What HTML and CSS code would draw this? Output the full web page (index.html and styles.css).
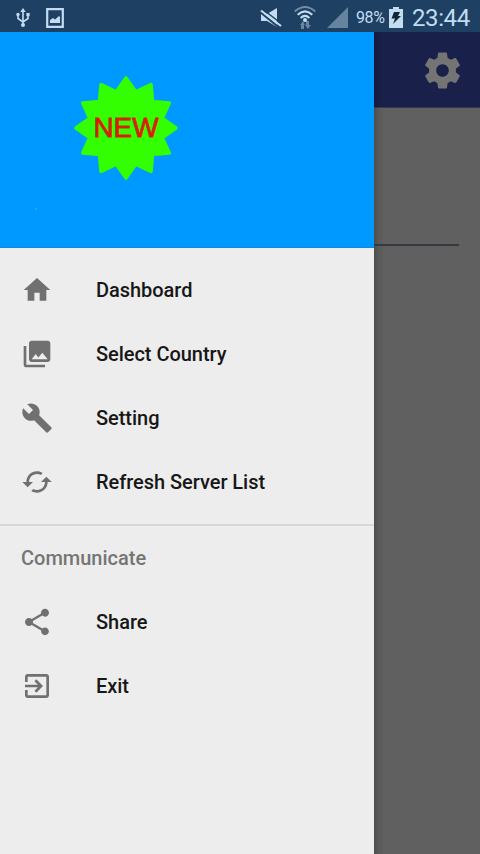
FILE: index.html
```html
<!DOCTYPE html>
<html lang="en">
<head>
<meta charset="utf-8">
<title>Navigation</title>
<link rel="stylesheet" href="styles.css">
</head>
<body>
<div class="screen">
  <header class="status">
    <svg class="usb" width="14" height="20" viewBox="0 0 14 20"><g fill="none" stroke="currentColor" stroke-width="1.6"><path d="M7 17V3M2 7v3.500l5 3.500 5-3.500V7"/></g><path d="M7 0l2.700 4H4.300z" fill="currentColor"/><circle cx="7" cy="17" r="2" fill="currentColor"/><circle cx="2" cy="6.500" r="1.700" fill="currentColor"/><path d="M10.400 5h3.200v3.200h-3.200z" fill="currentColor"/></svg>
    <svg class="photo" width="18" height="20" viewBox="0 0 18 20"><path d="M1.200 1.200h15.600v17.600H1.200z" fill="none" stroke="currentColor" stroke-width="2.200"/><path d="M4 15v-3l3-2 2 1.500L13 8l1 1v6z" fill="currentColor"/></svg>
    <span class="space"></span>
    <svg class="mute" width="22" height="20" viewBox="0 0 22 20"><path d="M1 6h6l10-6v19L7 13H1z" fill="currentColor"/><path d="M0 4l19 15.500" stroke="#1d4063" stroke-width="2"/><path d="M1 2.500l20 15.500" stroke="currentColor" stroke-width="2.200"/><path d="M2.500 1l19 14.800" stroke="#1d4063" stroke-width="1.400"/></svg>
    <svg class="wifi" width="22" height="24" viewBox="0 0 22 24"><g fill="none" stroke="currentColor" stroke-width="2"><path d="M.800 5.500Q11-3.500 21.200 5.500" opacity=".5"/><path d="M3.700 8.800Q11 2 18.300 8.800M6.600 12Q11 7.800 15.400 12"/></g><circle cx="11" cy="14" r="2" fill="currentColor"/><g fill="currentColor" opacity=".45"><path d="M6 19l3-4 2 4h-1v4H7v-4zM11 19h1v-4h3v4h2l-3 4z"/></g></svg>
    <svg class="signal" width="21" height="21" viewBox="0 0 21 21"><path d="M21 0v21H0z" fill="#6683a0"/></svg>
    <span class="percent">98%</span>
    <svg class="battery" width="14" height="21" viewBox="0 0 14 21"><path d="M4 0h6v2h4v19H0V2h4z" fill="currentColor"/><path d="M5 5h6l-2 4h3l-8 8 2-5.500H2.500z" fill="#142438"/></svg>
    <span class="clock">23:44</span>
  </header>
  <div class="body">
    <nav class="drawer">
      <div class="banner">
        <svg class="badge" width="108" height="108" viewBox="-54 -54 108 108">
          <path d="M0-50L9.700-36.200 25-43.300 26.500-26.500 43.300-25 36.200-9.700 50 0 36.200 9.700 43.300 25 26.500 26.500 25 43.300 9.700 36.200 0 50-9.700 36.200-25 43.300-26.500 26.500-43.300 25-36.200 9.700-50 0-36.200-9.700-43.300-25-26.500-26.500-25-43.300-9.700-36.200Z" fill="#3f0" stroke="#3f0" stroke-width="3.600" stroke-linejoin="round"/>
          <text class="new" x="-32.500" y="8.500" textLength="65" lengthAdjust="spacingAndGlyphs">NEW</text>
        </svg>
        <span class="dot"></span>
      </div>
      <ul class="menu">
        <li><svg viewBox="0 0 24 24"><path d="M10 20v-6h4v6h5v-8h3L12 3 2 12h3v8z"/></svg>Dashboard</li>
        <li><svg viewBox="0 0 24 24"><path d="M22 16V4c0-1.100-.9-2-2-2H8c-1.100 0-2 .9-2 2v12c0 1.100.9 2 2 2h12c1.100 0 2-.9 2-2zm-11-4l2.030 2.710L16 11l4 5H8l3-4zM2 6v14c0 1.100.9 2 2 2h14v-2H4V6H2z"/></svg>Select Country</li>
        <li><svg viewBox="0 0 24 24"><path d="M22.700 19l-9.100-9.100c.9-2.300.4-5-1.500-6.900-2-2-5-2.400-7.400-1.300L9 6 6 9 1.600 4.700C.4 7.100.9 10.100 2.900 12.100c1.900 1.900 4.600 2.400 6.900 1.500l9.100 9.100c.4.4 1 .4 1.400 0l2.300-2.300c.5-.4.500-1.100.1-1.400z"/></svg>Setting</li>
        <li><svg viewBox="0 0 24 24"><path d="M19 8l-4 4h3c0 3.310-2.690 6-6 6-1.010 0-1.970-.25-2.800-.7l-1.460 1.460C8.970 19.540 10.430 20 12 20c4.420 0 8-3.580 8-8h3l-4-4zM6 12c0-3.310 2.690-6 6-6 1.010 0 1.970.25 2.800.7l1.460-1.460C15.030 4.460 13.570 4 12 4c-4.420 0-8 3.580-8 8H1l4 4 4-4H6z"/></svg>Refresh Server List</li>
      </ul>
      <h2 class="group">Communicate</h2>
      <ul class="menu">
        <li><svg viewBox="0 0 24 24"><path d="M18 16.080c-.76 0-1.440.3-1.960.77L8.910 12.700c.05-.23.090-.46.090-.7s-.040-.47-.090-.7l7.050-4.110c.54.500 1.250.81 2.040.81 1.660 0 3-1.340 3-3s-1.340-3-3-3-3 1.340-3 3c0 .24.040.47.090.7L8.040 9.810C7.500 9.310 6.790 9 6 9c-1.660 0-3 1.340-3 3s1.340 3 3 3c.79 0 1.500-.31 2.040-.81l7.120 4.160c-.050.21-.080.43-.080.65 0 1.610 1.310 2.920 2.920 2.920s2.920-1.310 2.920-2.920-1.310-2.920-2.920-2.920z"/></svg>Share</li>
        <li><svg viewBox="0 0 24 24"><path d="M10.090 15.590L11.500 17l5-5-5-5-1.410 1.410L12.670 11H3v2h9.670l-2.580 2.590zM19 3H5c-1.110 0-2 .9-2 2v4h2V5h14v14H5v-4H3v4c0 1.100.89 2 2 2h14c1.100 0 2-.9 2-2V5c0-1.100-.9-2-2-2z"/></svg>Exit</li>
      </ul>
    </nav>
    <main class="page">
      <div class="toolbar"><svg class="gear" viewBox="0 0 24 24"><path d="M19.430 12.980c.040-.32.070-.64.070-.98s-.030-.66-.070-.98l2.110-1.650c.19-.15.240-.42.120-.64l-2-3.460c-.12-.22-.39-.3-.61-.22l-2.490 1c-.52-.4-1.080-.73-1.690-.98l-.38-2.650C14.460 2.180 14.250 2 14 2h-4c-.25 0-.46.180-.49.420l-.38 2.650c-.61.250-1.170.59-1.690.98l-2.490-1c-.23-.090-.49 0-.61.220l-2 3.460c-.13.220-.070.490.120.640l2.110 1.650c-.040.320-.070.650-.070.980s.030.660.070.980l-2.110 1.650c-.19.150-.24.420-.12.640l2 3.460c.12.220.39.300.61.220l2.490-1c.52.400 1.080.730 1.690.980l.38 2.650c.030.240.240.420.490.420h4c.25 0 .46-.18.490-.42l.38-2.650c.61-.25 1.170-.59 1.690-.98l2.490 1c.23.090.49 0 .61-.22l2-3.460c.12-.22.070-.49-.12-.64l-2.110-1.650zM12 15.500c-1.930 0-3.500-1.570-3.500-3.500s1.570-3.500 3.500-3.500 3.500 1.570 3.500 3.500-1.570 3.500-3.500 3.500z"/></svg></div>
      <div class="field"></div>
    </main>
  </div>
</div>
</body>
</html>
```
FILE: styles.css
```css
* { box-sizing: border-box; }
body { margin: 0; font-family: Roboto, "Liberation Sans", sans-serif; }
svg { display: block; flex: none; }
.screen { width: 480px; height: 854px; display: flex; flex-direction: column; overflow: hidden; }
.status { height: 32px; flex: none; display: flex; align-items: center; padding: 3px 10px 0 16px; background: #1d4063; color: #c3dcf2; }
.photo { margin-left: 16px; }
.space { flex: 1; }
.wifi { margin-left: 12px; }
.signal { margin-left: 11px; }
.percent { margin-left: 8px; width: 29px; font-size: 16px; letter-spacing: -0.4px; white-space: nowrap; }
.battery { margin-left: 4px; }
.clock { margin-left: 9px; width: 58px; font-size: 24px; letter-spacing: -0.4px; line-height: 28px; padding-top: 1px; }
.body { flex: 1; display: flex; }
.drawer { width: 374px; flex: none; background: #ededed; }
.banner { height: 216px; background: #0099ff; padding: 42px 0 0 72px; border-bottom: 1px solid #1689dc; }
.new { font: 27px "Liberation Sans", sans-serif; fill: #d81e06; stroke: #d81e06; stroke-width: 0.8px; }
.dot { display: block; width: 2px; height: 2px; margin: 26px 0 0 -37px; background: #24a8fb; }
.menu { list-style: none; margin: 0; padding: 10px 0 10px; }
.menu li { height: 64px; display: flex; align-items: center; gap: 43px; padding-left: 21px; font-size: 20px; font-weight: 500; letter-spacing: -0.04px; color: #171717; }
.menu svg { width: 32px; height: 32px; fill: #707070; }
.group { margin: 0; height: 66px; padding: 0 21px; border-top: 2px solid #d8d8d8; font-size: 20px; font-weight: 500; line-height: 65px; color: #757575; }
.group + .menu { padding-top: 0; }
.page { flex: 1; background: linear-gradient(90deg, #4c4c4c 0, #595959 4px, #606060 11px); }
.toolbar { height: 76px; display: flex; justify-content: flex-end; align-items: center; padding: 1px 16px 0 0; background: linear-gradient(90deg, #141a3c 0, #192049 8px); border-bottom: 1px solid #35384a; }
.gear { width: 43px; height: 43px; fill: #747474; }
.field { width: 85px; height: 138px; border-bottom: 2px solid #353a40; }
```
